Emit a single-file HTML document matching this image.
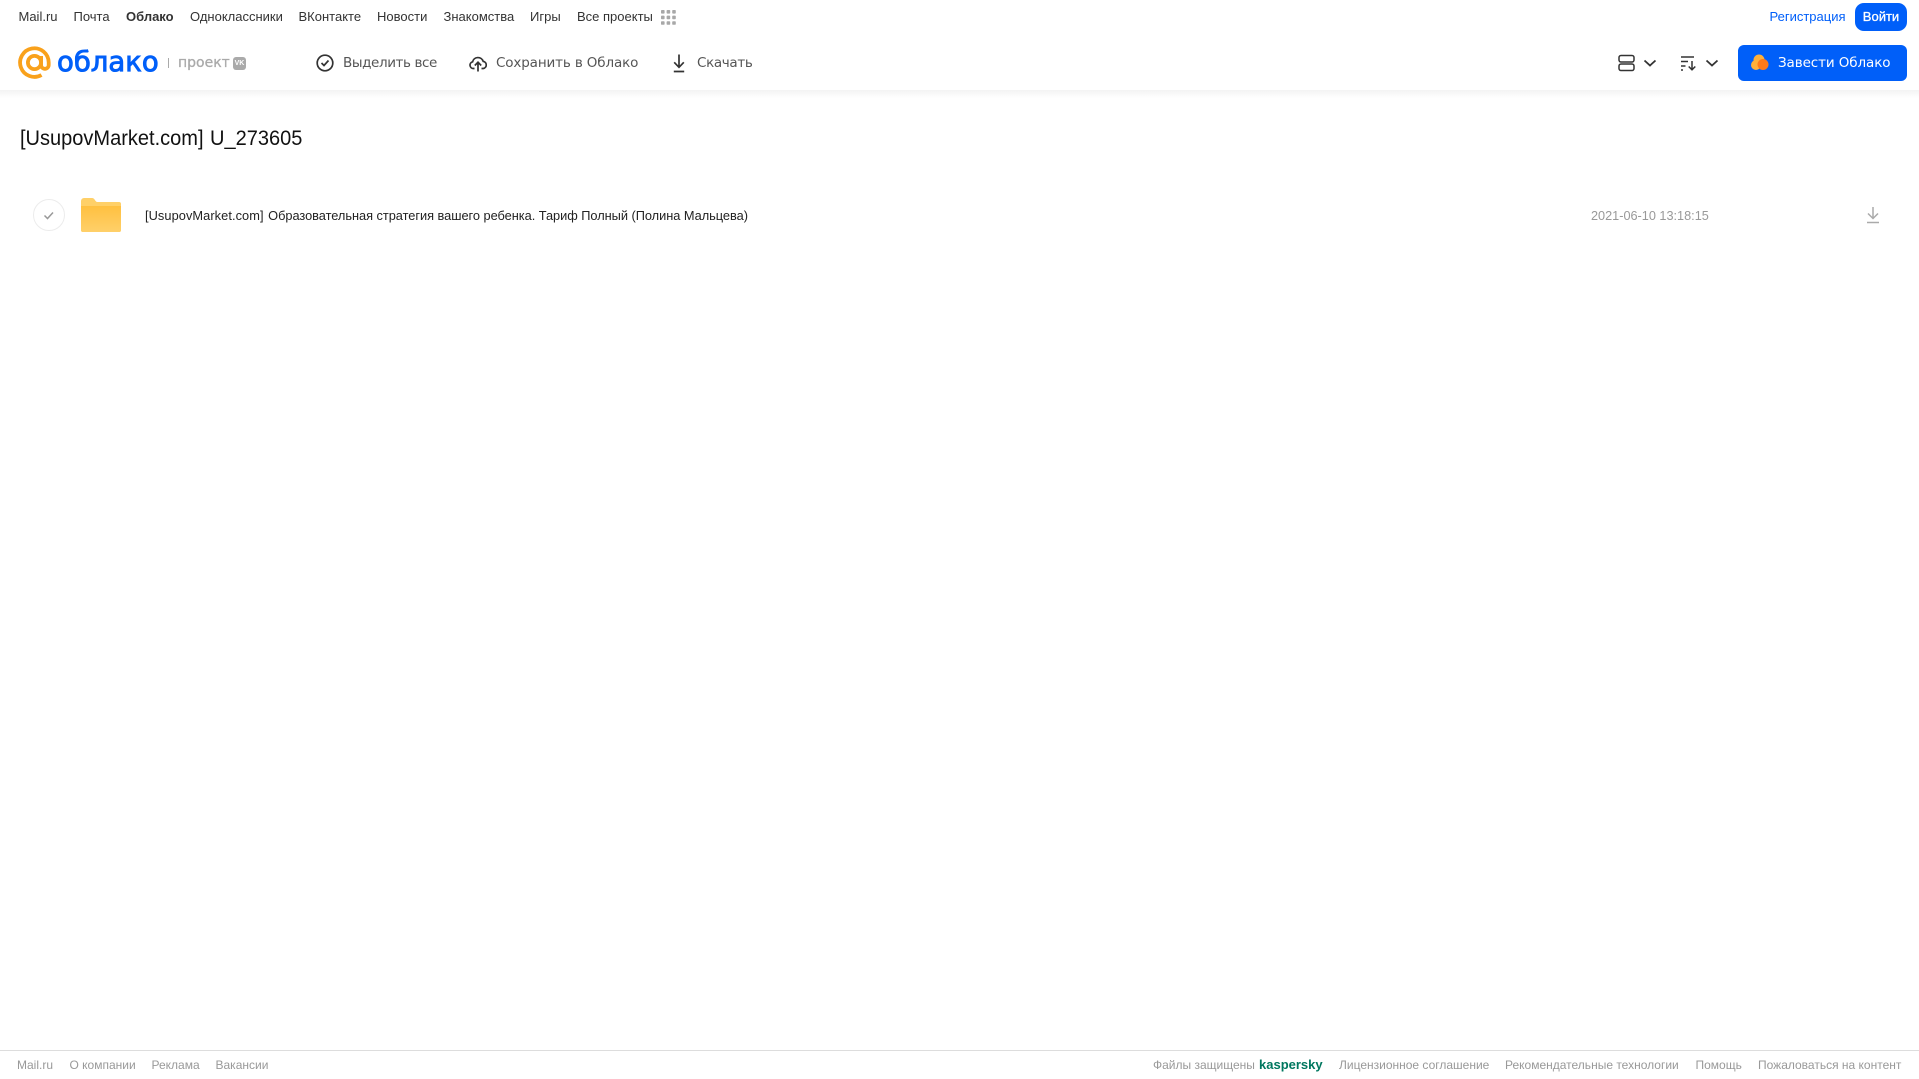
<!DOCTYPE html>
<html lang="ru"><head><meta charset="utf-8"><title>Облако</title>
<style>
html,body{margin:0;padding:0;background:#fff;width:1919px;height:1079px;overflow:hidden}
body{font-family:"Liberation Sans",sans-serif;position:relative}
.t{position:absolute;white-space:nowrap;line-height:18px;height:18px}
.n{font-size:13px;color:#333;top:8px}
.b{font-family:"DejaVu Sans",sans-serif;font-size:13.5px;color:#555;top:54px}
.f{font-size:12px;color:#999;top:1056px}
svg{position:absolute;display:block}
</style></head><body>
<div class="t n" style="left:18.500px">Mail.ru</div>
<div class="t n" style="left:73.500px">Почта</div>
<div class="t n" style="left:126px;font-weight:700">Облако</div>
<div class="t n" style="left:190px">Одноклассники</div>
<div class="t n" style="left:298.500px">ВКонтакте</div>
<div class="t n" style="left:377px">Новости</div>
<div class="t n" style="left:443.500px">Знакомства</div>
<div class="t n" style="left:530px">Игры</div>
<div class="t n" style="left:577px">Все проекты</div>
<svg style="left:661px;top:10px" width="15" height="15" fill="#a8a8a8"><rect width="3.600" height="3.600" rx=".8"/><rect x="5.600" width="3.600" height="3.600" rx=".8"/><rect x="11.200" width="3.600" height="3.600" rx=".8"/><rect y="5.600" width="3.600" height="3.600" rx=".8"/><rect x="5.600" y="5.600" width="3.600" height="3.600" rx=".8"/><rect x="11.200" y="5.600" width="3.600" height="3.600" rx=".8"/><rect y="11.200" width="3.600" height="3.600" rx=".8"/><rect x="5.600" y="11.200" width="3.600" height="3.600" rx=".8"/><rect x="11.200" y="11.200" width="3.600" height="3.600" rx=".8"/></svg>
<div class="t n" style="left:1769.500px;color:#005ff9">Регистрация</div>
<div class="t" style="left:1855px;top:3px;width:52px;height:28px;line-height:27px;background:#005ff9;border-radius:9px;color:#fff;font-size:13px;text-align:center;-webkit-text-stroke:.3px #fff">Войти</div>

<div style="position:absolute;left:0;top:90px;width:1919px;height:8px;background:linear-gradient(#f3f3f3,#fff)"></div>

<svg style="left:18px;top:46px" width="34" height="34" viewBox="0 0 34 34" fill="none" stroke="#f9a11b" stroke-width="3.800"><circle cx="16.500" cy="16.500" r="6.600"/><path d="M23.100 10v9a3.800 3.800 0 0 0 7.600 0v-2.500A14.300 14.300 0 1 0 23.500 29"/></svg>
<div class="t" style="left:57px;top:44px;height:36px;line-height:36px;font-family:'DejaVu Sans',sans-serif;font-size:27.500px;color:#005ff9;-webkit-text-stroke:.9px #005ff9">облако</div>
<div style="position:absolute;left:168px;top:58px;width:1px;height:10px;background:#aaa"></div>
<div class="t" style="left:178px;top:54px;font-family:'DejaVu Sans',sans-serif;font-size:14px;color:#aaa;-webkit-text-stroke:.3px #aaa">проект</div>
<div class="t" style="left:233px;top:57px;width:13px;height:13px;line-height:13px;border-radius:3px;background:#aaa;color:#fff;font-size:7px;font-weight:700;text-align:center">VK</div>

<svg style="left:315px;top:53px" width="20" height="20" fill="none" stroke="#333" stroke-width="1.700"><circle cx="10" cy="10" r="7.800"/><path d="M6.500 10l2.500 2.500 4.500-5"/></svg>
<div class="t b" style="left:343px;letter-spacing:-.4px">Выделить все</div>
<svg style="left:469px;top:53px" width="18" height="20" viewBox="0 0 18 20" fill="none" stroke="#333" stroke-width="1.700"><path d="M5.500 15.500H4.500a3.400 3.400 0 0 1-.9-6.700 5.500 5.500 0 0 1 10.600-.4 3.600 3.600 0 0 1 .1 7.100H12.500M9 18.500V9.500M5.800 12.500L9 9.200l3.200 3.300"/></svg>
<div class="t b" style="left:496px;letter-spacing:-.14px">Сохранить в Облако</div>
<svg style="left:669px;top:53px" width="20" height="20" fill="none" stroke="#333" stroke-width="1.700"><path d="M10 1.500V14M5.200 9.300L10 14.300l4.800-5M4.800 18.500h10.400"/></svg>
<div class="t b" style="left:697px;letter-spacing:-.35px">Скачать</div>

<svg style="left:1618px;top:54px" width="18" height="18" fill="none" stroke="#333" stroke-width="1.500"><rect x="1" y="1.500" width="15" height="6.500" rx="2"/><rect x="1" y="10" width="15" height="6.500" rx="2"/></svg>
<svg style="left:1643px;top:59px" width="14" height="9" fill="none" stroke="#333" stroke-width="1.800"><path d="M1.500 1.500L7 6.500l5.500-5"/></svg>
<svg style="left:1680px;top:55px" width="18" height="16" fill="none" stroke="#333" stroke-width="1.500"><path d="M1 2h13M1 6.500h7M1 11h4.500M1 15h2M12 6v8.500M8.700 11.500l3.300 3.300 3.300-3.300"/></svg>
<svg style="left:1705px;top:59px" width="14" height="9" fill="none" stroke="#333" stroke-width="1.800"><path d="M1.500 1.500L7 6.500l5.500-5"/></svg>
<div style="position:absolute;left:1738px;top:45px;width:169px;height:36px;background:#005ff9;border-radius:6px"></div>
<svg style="left:1750px;top:54px" width="20" height="17"><circle cx="6" cy="11" r="5" fill="#ffb03a"/><circle cx="9" cy="6" r="5.500" fill="#ffb03a"/><circle cx="13" cy="10.500" r="5.500" fill="#ff7a1a"/></svg>
<div class="t b" style="left:1778px;color:#fff;letter-spacing:-.1px">Завести Облако</div>

<div class="t" style="left:20px;top:124px;height:28px;line-height:28px;font-size:21.500px;color:#111;transform:scaleX(.931);transform-origin:0 50%">[UsupovMarket.com] <span style="margin-left:1px">U_273605</span></div>

<div style="position:absolute;left:33px;top:199px;width:30px;height:30px;border:1px solid #ececec;border-radius:50%"></div>
<svg style="left:42px;top:210px" width="14" height="11" fill="none" stroke="#999" stroke-width="1.500"><path d="M2.500 5.500L5.500 8.500 11 2.500"/></svg>
<svg style="left:81px;top:198px" width="40" height="34"><defs><linearGradient id="g" x1="0" y1="0" x2="0" y2="1"><stop offset="0" stop-color="#ffc040"/><stop offset="1" stop-color="#ffd06a"/></linearGradient></defs><path d="M0 3a3 3 0 0 1 3-3h8c3 0 3 4 5.500 4H38a2 2 0 0 1 2 2v26a2 2 0 0 1-2 2H2a2 2 0 0 1-2-2z" fill="#ffd068"/><path d="M0 8h40v24a2 2 0 0 1-2 2H2a2 2 0 0 1-2-2z" fill="url(#g)"/></svg>
<div class="t" style="left:145px;top:207px;font-size:12.800px;color:#222"><span style="letter-spacing:.07px">[UsupovMarket.com]</span> <span style="letter-spacing:-.035px;margin-left:1px">Образовательная стратегия вашего ребенка. Тариф Полный (Полина Мальцева)</span></div>
<div class="t" style="left:1591px;top:207px;font-size:12.700px;color:#999">2021-06-10 13:18:15</div>
<svg style="left:1864px;top:206px" width="18" height="18" fill="none" stroke="#aaa" stroke-width="1.500"><path d="M9 1v11M4 7.500L9 12.500l5-5M3 16.500h12"/></svg>

<div style="position:absolute;left:0;top:1050px;width:1919px;height:1px;background:#ddd"></div>
<div class="t f" style="left:17px">Mail.ru</div>
<div class="t f" style="left:69.500px">О компании</div>
<div class="t f" style="left:151.500px">Реклама</div>
<div class="t f" style="left:215.500px">Вакансии</div>
<div class="t f" style="left:1153px">Файлы защищены</div>
<div class="t f" style="left:1259px;color:#00775f;font-weight:700;font-size:13px">kaspersky</div>
<div class="t f" style="left:1339px">Лицензионное соглашение</div>
<div class="t f" style="left:1505px">Рекомендательные технологии</div>
<div class="t f" style="left:1695.500px">Помощь</div>
<div class="t f" style="left:1758px">Пожаловаться на контент</div>
</body></html>
